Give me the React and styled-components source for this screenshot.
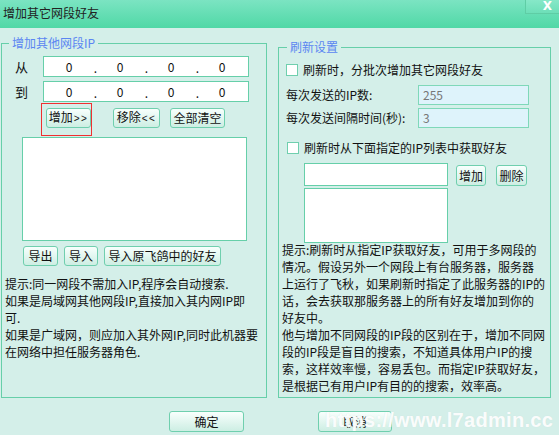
import React from "react";
import styled, { createGlobalStyle } from "styled-components";

const Global = createGlobalStyle`
  html, body { margin: 0; padding: 0; background: #d4efe9; }
  body { font-family: "Noto Sans CJK SC", "Noto Sans", sans-serif; font-size: 12px; color: #111; }
  * { box-sizing: border-box; }
`;

const Window = styled.div`
  width: 559px;
  height: 435px;
  background: #d4efe9;
  display: flex;
  flex-direction: column;
  overflow: hidden;
`;

const TitleBar = styled.div`
  height: 28px;
  flex: none;
  background: linear-gradient(#7be4c2, #50d8a6);
  display: flex;
  align-items: flex-start;
  justify-content: space-between;
`;

const Title = styled.div`
  padding: 5px 0 0 3px;
  font-size: 12px;
  line-height: 16px;
  color: #222;
`;

const CloseBtn = styled.div`
  width: 34px;
  height: 14px;
  background: linear-gradient(#86e8c8, #6ddfb8);
  border-left: 1px solid #5fcda5;
  border-bottom: 1px solid #5fcda5;
  color: #fff;
  font-family: "DejaVu Sans", sans-serif;
  font-weight: bold;
  font-size: 12px;
  line-height: 13px;
  text-align: center;
  padding-left: 10px;
`;

const Body = styled.div`
  position: relative;
  flex: 1;
  display: flex;
  flex-direction: column;
  padding-left: 1px;
`;

const Columns = styled.div`
  display: flex;
  align-items: flex-start;
  gap: 11px;
`;

const Group = styled.fieldset`
  margin: ${(p) => p.$top}px 0 0 0;
  padding: 0;
  border: 1px solid #66cfa9;
  width: ${(p) => p.$w}px;
  height: ${(p) => p.$h}px;
  min-width: 0;
`;

const Legend = styled.legend`
  margin-left: ${(p) => p.$ml}px;
  padding: 0 3px;
  font-size: 12px;
  line-height: 16px;
  color: #5b86f2;
`;

const Content = styled.div`
  display: flex;
  flex-direction: column;
  padding-top: ${(p) => p.$pt}px;
`;

const IpRow = styled.div`
  display: flex;
  align-items: center;
  margin: ${(p) => p.$mt}px 0 0 13px;
`;

const RowLabel = styled.div`
  width: 28px;
  font-size: 13px;
  line-height: 16px;
`;

const IpBox = styled.div`
  width: 206px;
  height: 21px;
  background: #fff;
  border: 1px solid #66cfa9;
  display: flex;
  align-items: center;
  padding-left: 2px;
  font-size: 12px;
`;

const Octet = styled.span`
  width: 46px;
  text-align: center;
`;

const Dot = styled.span`
  width: 5px;
  text-align: right;
  padding-top: 2px;
`;

const ButtonRow = styled.div`
  display: flex;
  gap: ${(p) => p.$gap ?? 6}px;
  margin: ${(p) => p.$m};
`;

const Btn = styled.button`
  width: ${(p) => p.$w}px;
  height: ${(p) => p.$h || 20}px;
  margin-left: ${(p) => p.$ml || 0}px;
  padding: 0;
  border: 1px solid #6fcfae;
  border-radius: 3px;
  background: linear-gradient(#f8fffd, #cdeee3);
  font-family: "Noto Sans CJK SC", sans-serif;
  font-size: 12px;
  line-height: 16px;
  color: #111;
  flex: none;
  white-space: nowrap;
`;

const Arrows = styled.span`
  font-family: "Liberation Sans", sans-serif;
  font-size: 10px;
  letter-spacing: 1.5px;
  margin-left: 1px;
`;

const Marked = styled.div`
  position: relative;
  display: flex;
`;

const RedFrame = styled.span`
  position: absolute;
  left: -5px;
  top: -5px;
  right: -1px;
  bottom: -8px;
  border: 1px solid #f03030;
  pointer-events: none;
`;

const ListBox = styled.div`
  width: ${(p) => p.$w}px;
  height: ${(p) => p.$h}px;
  margin: ${(p) => p.$m};
  background: #fff;
  border: 1px solid #66cfa9;
`;

const Hint = styled.div`
  margin: ${(p) => p.$m};
  font-size: 12px;
  line-height: 17px;
  white-space: pre;
  color: #111;
`;

const CheckRow = styled.div`
  display: flex;
  align-items: center;
  gap: 5px;
  margin: ${(p) => p.$m};
  font-size: 12px;
  line-height: 16px;
`;

const CheckBox = styled.span`
  width: 12px;
  height: 12px;
  background: #fff;
  border: 1px solid #6fcfae;
  flex: none;
`;

const FieldRow = styled.div`
  display: flex;
  align-items: center;
  margin: ${(p) => p.$m};
`;

const FieldLabel = styled.div`
  width: 132px;
  font-size: 12px;
  line-height: 16px;
`;

const NumInput = styled.div`
  width: 111px;
  height: 20px;
  background: #def3fb;
  border: 1px solid #7fd8b9;
  color: #777;
  font-size: 12px;
  line-height: 18px;
  padding-left: 4px;
`;

const IpListRow = styled.div`
  display: flex;
  align-items: flex-start;
  margin: ${(p) => p.$m};
`;

const IpListCol = styled.div`
  display: flex;
  flex-direction: column;
  gap: 2px;
`;

const TextInput = styled.div`
  width: 144px;
  height: 23px;
  background: #fff;
  border: 1px solid #66cfa9;
`;

const Footer = styled.div`
  display: flex;
  gap: 74px;
  padding-left: 168px;
  margin-top: 13px;
`;

const Watermark = styled.div`
  position: absolute;
  left: 325px;
  top: 382px;
  font-family: "Liberation Sans", Arial, sans-serif;
  font-weight: bold;
  font-size: 20px;
  letter-spacing: 0.3px;
  line-height: 20px;
  color: rgba(255, 255, 255, 0.93);
  text-shadow: 0 0 1px rgba(200, 220, 215, 0.6);
  pointer-events: none;
`;

const Ip = () => (
  <IpBox>
    <Octet>0</Octet>
    <Dot>.</Dot>
    <Octet>0</Octet>
    <Dot>.</Dot>
    <Octet>0</Octet>
    <Dot>.</Dot>
    <Octet>0</Octet>
  </IpBox>
);

const leftHint = `提示:同一网段不需加入IP,程序会自动搜索.
如果是局域网其他网段IP,直接加入其内网IP即
可.
如果是广域网，则应加入其外网IP,同时此机器要
在网络中担任服务器角色.`;

const rightHint = `提示:刷新时从指定IP获取好友，可用于多网段的
情况。假设另外一个网段上有台服务器，服务器
上运行了飞秋，如果刷新时指定了此服务器的IP的
话，会去获取那服务器上的所有好友增加到你的
好友中。
他与增加不同网段的IP段的区别在于，增加不同网
段的IP段是盲目的搜索，不知道具体用户IP的搜
索，这样效率慢，容易丢包。而指定IP获取好友，
是根据已有用户IP有目的的搜索，效率高。`;

export default function App() {
  return (
    <>
      <Global />
      <Window>
        <TitleBar>
          <Title>增加其它网段好友</Title>
          <CloseBtn>X</CloseBtn>
        </TitleBar>
        <Body>
          <Columns>
            <Group $top={7} $w={266} $h={363}>
              <Legend $ml={7}>增加其他网段IP</Legend>
              <Content $pt={5}>
                <IpRow $mt={0}>
                  <RowLabel>从</RowLabel>
                  <Ip />
                </IpRow>
                <IpRow $mt={4}>
                  <RowLabel>到</RowLabel>
                  <Ip />
                </IpRow>
                <ButtonRow $m="6px 0 0 44px" $gap={0}>
                  <Marked>
                    <Btn $w={45}>
                      增加<Arrows>&gt;&gt;</Arrows>
                    </Btn>
                    <RedFrame />
                  </Marked>
                  <Btn $w={47} $ml={22}>
                    移除<Arrows>&lt;&lt;</Arrows>
                  </Btn>
                  <Btn $w={55} $ml={10}>全部清空</Btn>
                </ButtonRow>
                <ListBox $w={225} $h={104} $m="9px 0 0 20px" />
                <ButtonRow $m="5px 0 0 21px" $gap={6}>
                  <Btn $w={35}>导出</Btn>
                  <Btn $w={34}>导入</Btn>
                  <Btn $w={117}>导入原飞鸽中的好友</Btn>
                </ButtonRow>
                <Hint $m="9px 0 0 3px">{leftHint}</Hint>
              </Content>
            </Group>
            <Group $top={11} $w={273} $h={359}>
              <Legend $ml={8}>刷新设置</Legend>
              <Content $pt={7}>
                <CheckRow $m="0 0 0 7px">
                  <CheckBox />
                  刷新时，分批次增加其它网段好友
                </CheckRow>
                <FieldRow $m="7px 0 0 7px">
                  <FieldLabel>每次发送的IP数:</FieldLabel>
                  <NumInput>255</NumInput>
                </FieldRow>
                <FieldRow $m="3px 0 0 7px">
                  <FieldLabel>每次发送间隔时间(秒):</FieldLabel>
                  <NumInput>3</NumInput>
                </FieldRow>
                <CheckRow $m="12px 0 0 8px">
                  <CheckBox />
                  刷新时从下面指定的IP列表中获取好友
                </CheckRow>
                <IpListRow $m="7px 0 0 25px">
                  <IpListCol>
                    <TextInput />
                    <ListBox $w={144} $h={55} $m="0" />
                  </IpListCol>
                  <ButtonRow $m="2px 0 0 8px" $gap={10}>
                    <Btn $w={30} $h={21}>增加</Btn>
                    <Btn $w={31} $h={21}>删除</Btn>
                  </ButtonRow>
                </IpListRow>
                <Hint $m="-2px 0 0 3px">{rightHint}</Hint>
              </Content>
            </Group>
          </Columns>
          <Footer>
            <Btn $w={75} $h={21}>确定</Btn>
            <Btn $w={74} $h={21}>取消</Btn>
          </Footer>
          <Watermark>https://www.l7admin.cc</Watermark>
        </Body>
      </Window>
    </>
  );
}
